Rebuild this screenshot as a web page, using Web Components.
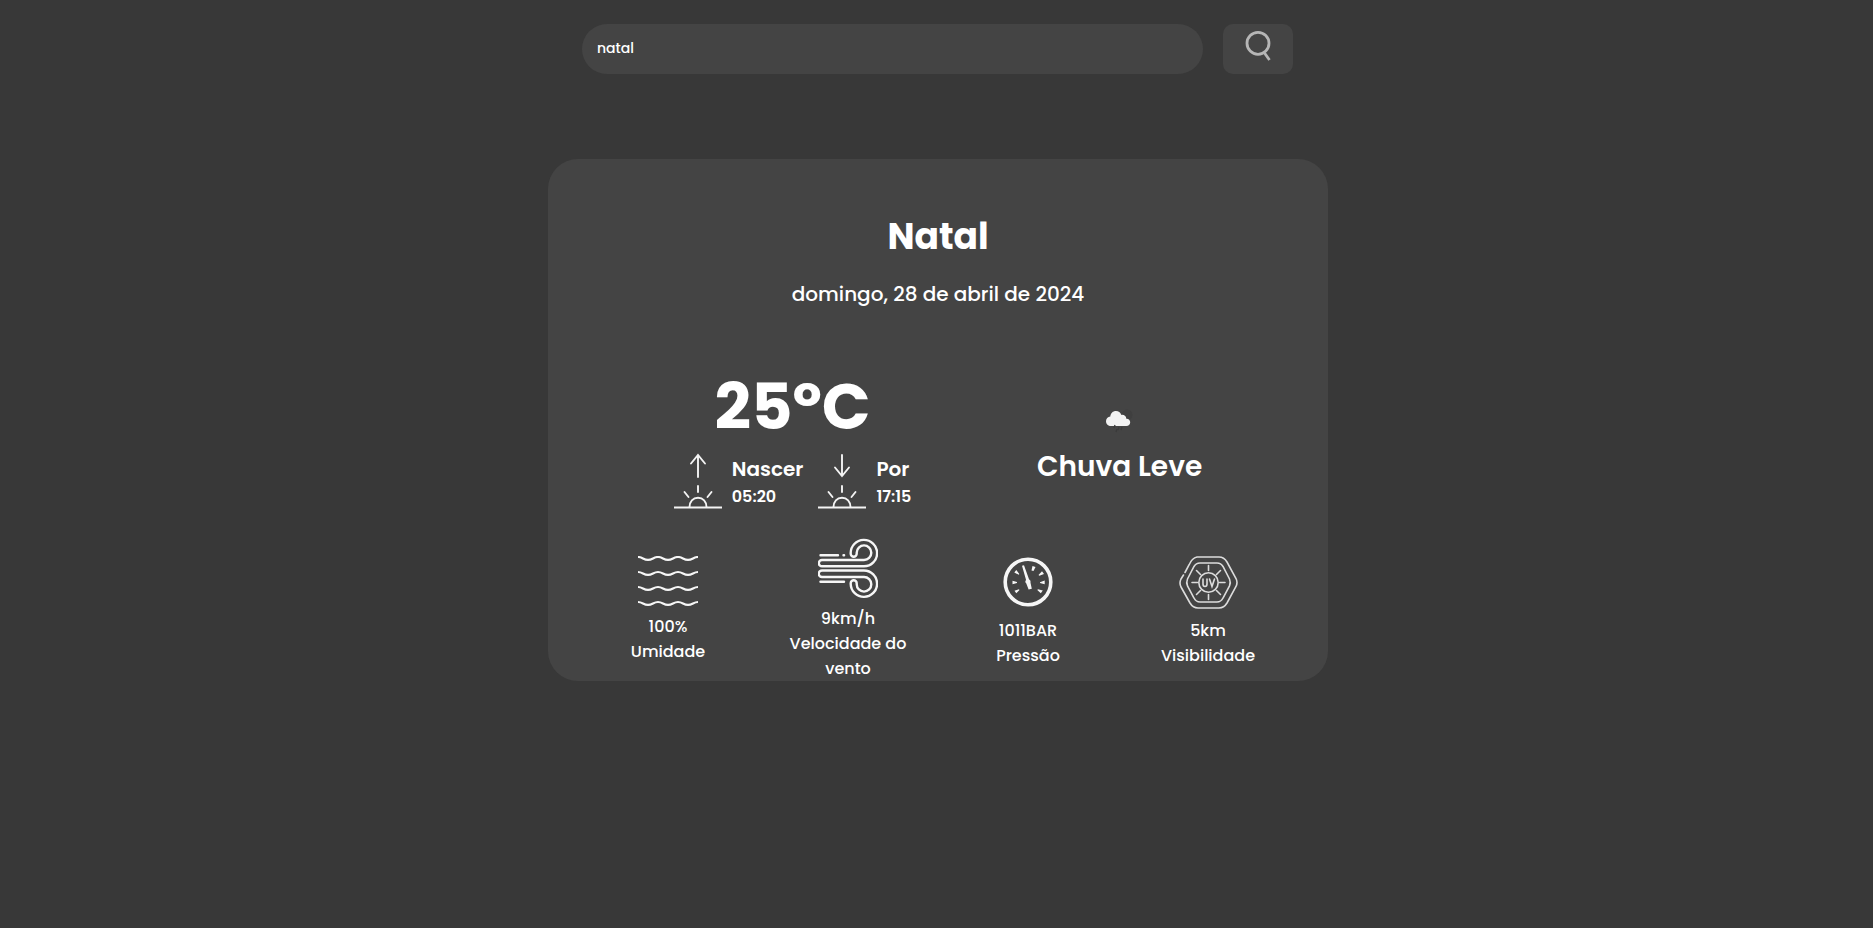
<!DOCTYPE html>
<html lang="pt-BR">
<head>
<meta charset="utf-8">
<meta name="viewport" content="width=device-width, initial-scale=1">
<title>Previsão do tempo</title>
<style>
  html { background: #383838; }
  body {
    margin: 0;
    color: #fff;
    font-family: Poppins, Inter, "Open Sans", sans-serif;
    font-size: 16px;
    font-weight: 500;
  }
</style>
</head>
<body>
<weather-app></weather-app>

<template id="weather-app">
  <style>
    :host { display: block; padding: 24px 0 24px 3px; }
    main { max-width: 780px; margin: 0 auto; display: grid; gap: 85px; }
  </style>
  <main>
    <search-bar value="natal"></search-bar>
    <weather-card>
      <span slot="city">Natal</span>
      <span slot="date">domingo, 28 de abril de 2024</span>
      <span slot="temp">25ºC</span>
      <sun-time slot="sun" icon="rise" label="Nascer" time="05:20"></sun-time>
      <sun-time slot="sun" icon="set" label="Por" time="17:15"></sun-time>
      <span slot="condition">Chuva Leve</span>
      <weather-detail slot="detail" icon="waves" value="100%">Umidade</weather-detail>
      <weather-detail slot="detail" icon="wind" value="9km/h">Velocidade do vento</weather-detail>
      <weather-detail slot="detail" icon="gauge" value="1011BAR">Pressão</weather-detail>
      <weather-detail slot="detail" icon="uv" value="5km">Visibilidade</weather-detail>
    </weather-card>
  </main>
</template>

<template id="search-bar">
  <style>
    :host { display: block; }
    form { display: flex; gap: 20px; height: 50px; padding: 0 35px 0 34px; }
    input, button { border: 0; margin: 0; background: #444; color: inherit; font: inherit; outline: 0; box-sizing: border-box; }
    input { flex: 1; min-width: 0; padding: 0 15px 1px; border-radius: 25px; font-size: 14px; }
    button { width: 70px; padding: 0; border-radius: 10px; display: grid; place-items: start center; cursor: pointer; }
    svg { display: block; }
  </style>
  <form>
    <input type="text" name="city" aria-label="Cidade">
    <button type="submit" aria-label="Buscar">
      <svg width="30" height="44" viewBox="0 0 30 44" fill="none" stroke="#b6b6b6" stroke-width="2.800">
        <circle cx="15" cy="19.300" r="11"/>
        <path d="M21.500 29 26.500 36"/>
      </svg>
    </button>
  </form>
</template>

<template id="weather-card">
  <style>
    :host { display: block; padding-top: 51px; border-radius: 30px; background: #444; text-align: center; }
    h1, p { margin: 0; }
    h1 { font-size: 36px; line-height: 54px; font-weight: 700; }
    .date { margin-top: 15px; font-size: 20px; line-height: 30px; }
    .now { display: flex; flex-wrap: wrap; justify-content: space-evenly; align-items: center; margin-top: 58px; }
    .temp { font-size: 64px; line-height: 80px; font-weight: 700; }
    .sun { display: flex; gap: 15px; margin-top: 6px; }
    .sky { padding-bottom: 4px; }
    .sky svg { display: block; margin: 0 auto; }
    .condition { font-size: 28px; line-height: 42px; font-weight: 600; }
    .details { display: flex; flex-wrap: wrap; justify-content: center; align-items: center; gap: 40px; margin-top: 28px; }
  </style>
  <h1><slot name="city"></slot></h1>
  <p class="date"><slot name="date"></slot></p>
  <div class="now">
    <div>
      <p class="temp"><slot name="temp"></slot></p>
      <div class="sun"><slot name="sun"></slot></div>
    </div>
    <div class="sky">
      <svg width="60" height="60" viewBox="-1 0 60 60" aria-hidden="true">
        <circle cx="36" cy="29" r="5.500" fill="#3f3f3f"/>
        <path d="M20 40c-2.800 0-5-2-5-4.800 0-2.500 1.800-4.500 4.300-4.800.4-3.200 2.600-5.400 5.700-5.400 2.500 0 4.500 1.600 5.300 3.900 3-.4 5 1.500 5 3.800 2.200-.2 3.900 1.400 3.900 3.600 0 2.100-1.600 3.700-3.900 3.700z" fill="#f2f2f2"/>
        <path d="m24 39-1 3M28 41l-1 3M31 41l-1 3M26 43l-1 3" stroke="#3a3a3a" stroke-width="1.300"/>
      </svg>
      <p class="condition"><slot name="condition"></slot></p>
    </div>
  </div>
  <div class="details"><slot name="detail"></slot></div>
</template>

<template id="sun-time">
  <style>
    :host { display: flex; gap: 10px; text-align: left; font-weight: 600; }
    svg { display: block; }
    div { padding-top: 3px; }
    p { margin: 0; line-height: 27px; }
    .label { font-size: 20px; }
  </style>
  <svg width="48" height="56" viewBox="0 0 48 56" fill="none" stroke="#f4f4f4" stroke-width="1.900" stroke-linecap="round" aria-hidden="true">
    <path class="arrow"/>
    <path d="M24 33v6M10.500 39l4 5M37.500 39l-4 5M15.500 54c0-5.500 3.500-9.300 8.500-9.300s8.500 3.800 8.500 9.300"/>
    <path d="M0 54.500h48" stroke-width="2.200" stroke-linecap="butt"/>
  </svg>
  <div><p class="label"></p><p class="time"></p></div>
</template>

<template id="weather-detail">
  <style>
    :host { display: grid; gap: 6px; width: 140px; justify-items: center; line-height: 25px; }
    svg { display: none; fill: none; stroke: #f6f6f6; stroke-linecap: round; }
    :host([icon="waves"]) .waves, :host([icon="wind"]) .wind,
    :host([icon="gauge"]) .gauge, :host([icon="uv"]) .uv { display: block; }
    .waves { stroke-linecap: butt; }
    .uv { stroke: #dcdcdc; }
    p { margin: 0; }
  </style>
  <svg class="waves" width="60" height="52" viewBox="0 2 60 52" stroke-width="2.200" aria-hidden="true">
    <path d="M0 3c4.500 0 5.500 2.800 10 2.800s5.500-2.800 10-2.800 5.500 2.800 10 2.800 5.500-2.800 10-2.800 5.500 2.800 10 2.800 5.500-2.800 10-2.800"/>
    <path d="M0 18c4.500 0 5.500 2.800 10 2.800s5.500-2.800 10-2.800 5.500 2.800 10 2.800 5.500-2.800 10-2.800 5.500 2.800 10 2.800 5.500-2.800 10-2.800"/>
    <path d="M0 33c4.500 0 5.500 2.800 10 2.800s5.500-2.800 10-2.800 5.500 2.800 10 2.800 5.500-2.800 10-2.800 5.500 2.800 10 2.800 5.500-2.800 10-2.800"/>
    <path d="M0 48c4.500 0 5.500 2.800 10 2.800s5.500-2.800 10-2.800 5.500 2.800 10 2.800 5.500-2.800 10-2.800 5.500 2.800 10 2.800 5.500-2.800 10-2.800"/>
  </svg>
  <svg class="wind" width="60" height="62" viewBox="0 0 60 62" stroke-width="2.400" aria-hidden="true">
    <path d="M2.500 17.300H20M25.500 17.300h.6"/>
    <path d="M4 22H46a7.300 7.300 0 1 0-7.300-7.300v1a3 3 0 0 1-6 0V15.500A13.200 13.200 0 1 1 46 28.300H4a3.100 3.100 0 0 1 0-6.300z"/>
    <path d="M4 39H46a7.300 7.300 0 1 1-7.300 7.300v-1a3 3 0 0 0-6 0V46A13.200 13.200 0 1 0 46 32.500H4a3.100 3.100 0 0 0 0 6.500z"/>
    <path d="M2.500 43.700H26"/>
  </svg>
  <svg class="gauge" width="60" height="60" viewBox="0 1 60 60" aria-hidden="true">
    <circle cx="30" cy="31" r="22.800" stroke-width="3.600"/>
    <g fill="#f6f6f6" stroke="none">
      <path d="m24 14.800 2-.5 5 14a3 3 0 0 1 1.500 3.500l1.300 6-3.200.8-2.300-6a3 3 0 0 1-.3-3.900z"/>
      <path d="m33.500 19.500 1-4.500 3 .9-2 4.100z"/>
      <path d="m20.800 23.800-4.500-2.300 2-2.500 3 4zM19 32l-4.500 1.200v-3.400L19 31zM21.500 39l-3.200 3.300-1.800-2.600 4.400-1.500zM40.500 24l3.500-3.700 2 2.600-4.600 1.900zM42 31.200l4.700-1.600V33.200L42 32zM40 38.300l4.800 1.300-2 2.700-3.500-3.300z"/>
    </g>
  </svg>
  <svg class="uv" width="60" height="60" viewBox="0 1 60 60" stroke-width="1.600" aria-hidden="true">
    <path d="M7 21.500 11 14q3-7 8-8h22q5 0 8 5l9 16.500q2 4 0 8L49 52q-3 5-8 5H20q-5 0-8-5L3 36q-2-4 0-8l2.500-4"/>
    <path d="M22 12h17q4 0 6 3.500l6.500 12.500q1.500 3.500 0 7L45 47q-2 4-6 4H22q-4 0-6-4L9.500 35q-1.500-3.500 0-7L16 15.500q2-3.500 6-3.500z"/>
    <circle cx="30.500" cy="31.500" r="9.700"/>
    <path d="M30.500 14.500v5M30.500 43.500v5M14 31.500h5.500M41.500 31.500H47M18.500 19.500l4 4M42.500 19.500l-4 4M18.500 43.500l4-4M42.500 43.500l-4-4"/>
    <path d="M25 28v5q0 2.500 2 2.500t2-2.500v-5M31.500 28l2.500 7.500L36.500 28"/>
  </svg>
  <div><p class="value"></p><p><slot></slot></p></div>
</template>

<script>
  class TemplateElement extends HTMLElement {
    constructor() {
      super();
      const root = this.attachShadow({ mode: 'open' });
      root.append(document.getElementById(this.localName).content.cloneNode(true));
    }
    find(selector) { return this.shadowRoot.querySelector(selector); }
  }

  class SearchBar extends TemplateElement {
    connectedCallback() {
      this.find('input').value = this.getAttribute('value') || '';
      this.find('form').addEventListener('submit', (event) => event.preventDefault());
    }
  }

  class SunTime extends TemplateElement {
    connectedCallback() {
      const up = 'M24 24V2M17 10.500 24 2l7 8.500';
      const down = 'M24 2v21M17 14.500 24 23l7-8.500';
      this.find('.arrow').setAttribute('d', this.getAttribute('icon') === 'rise' ? up : down);
      this.find('.label').textContent = this.getAttribute('label');
      this.find('.time').textContent = this.getAttribute('time');
    }
  }

  class WeatherDetail extends TemplateElement {
    connectedCallback() { this.find('.value').textContent = this.getAttribute('value'); }
  }

  customElements.define('search-bar', SearchBar);
  customElements.define('sun-time', SunTime);
  customElements.define('weather-detail', WeatherDetail);
  customElements.define('weather-card', class extends TemplateElement {});
  customElements.define('weather-app', class extends TemplateElement {});
</script>
</body>
</html>
